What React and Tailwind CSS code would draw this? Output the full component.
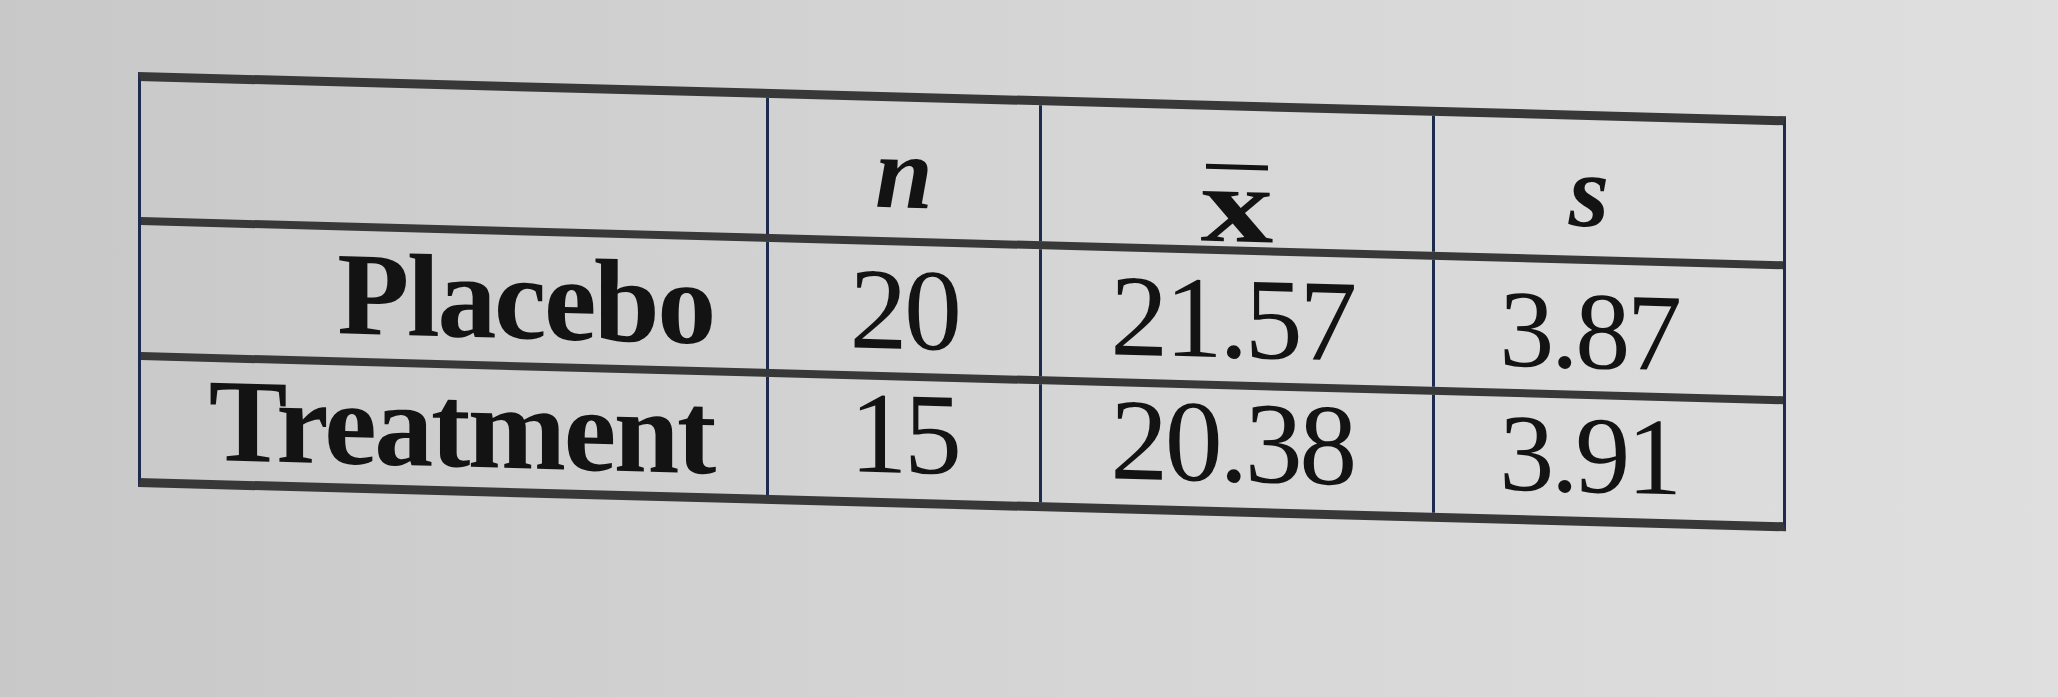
// App.jsx — summary table (n, x̄, s) photographed off a screen
const serif = { fontFamily: '"Liberation Serif", "Times New Roman", serif' };

const rows = [
  { label: "Placebo", n: "20", mean: "21.57", sd: "3.87", h: "h-[135px]", pb: "pb-[5px]", lpb: "pb-[4px]", line: "border-b-[8px]" },
  { label: "Treatment", n: "15", mean: "20.38", sd: "3.91", h: "h-[118px]", pb: "pb-[7px]", lpb: "pb-0", line: "" },
];

function Row({ row }) {
  return (
    <div className={`flex ${row.h} ${row.line} border-b-[#383838]`}>
      <div className={`w-[628px] flex items-end justify-end pr-[52px] ${row.lpb} border-r-[3px] border-r-[#1e2b4f]`}>
        <span className="text-[118px] leading-none font-bold tracking-[-0.02em]">{row.label}</span>
      </div>
      <div className={`w-[273px] flex items-end justify-center ${row.pb} border-r-[3px] border-r-[#1e2b4f]`}>
        <span className="text-[116px] leading-none tracking-[-0.03em]">{row.n}</span>
      </div>
      <div className={`w-[393px] flex items-end justify-center pr-[10px] ${row.pb} border-r-[3px] border-r-[#1e2b4f]`}>
        <span className="text-[116px] leading-none tracking-[-0.03em]">{row.mean}</span>
      </div>
      <div className={`flex-1 flex items-end justify-center pr-[40px] ${row.pb}`}>
        <span className="text-[110px] leading-none tracking-[-0.03em]">{row.sd}</span>
      </div>
    </div>
  );
}

export default function App() {
  return (
    <div
      className="w-[2058px] h-[697px] overflow-hidden bg-gradient-to-r from-[#c8c8c8] via-[#d5d5d5] to-[#dfdfdf] pl-[138px] pt-[72px]"
      style={serif}>
      <div className="w-[1648px] origin-top-left skew-y-[1.54deg] text-[#131313] border-t-[9px] border-b-[9px] border-t-[#383838] border-b-[#383838] border-l-[3px] border-r-[3px] border-l-[#1e2b4f] border-r-[#1e2b4f]">
        {/* header */}
        <div className="flex h-[144px] border-b-[8px] border-b-[#383838]">
          <div className="w-[628px] border-r-[3px] border-r-[#1e2b4f]" />
          <div className="w-[273px] flex items-end justify-center pb-[13px] border-r-[3px] border-r-[#1e2b4f]">
            <span className="text-[104px] leading-none font-bold italic">n</span>
          </div>
          <div className="w-[393px] flex flex-col items-center justify-end pb-[1px] border-r-[3px] border-r-[#1e2b4f]">
            <div className="w-[62px] h-[5px] bg-[#131313] -mb-[5px]" />
            <span className="inline-block text-[108px] leading-[0.75] font-bold scale-x-[1.35]">x</span>
          </div>
          <div className="flex-1 flex items-end justify-center pr-[40px] pb-[13px]">
            <span className="text-[104px] leading-none font-bold italic">s</span>
          </div>
        </div>
        {rows.map((row) => (
          <Row key={row.label} row={row} />
        ))}
      </div>
    </div>
  );
}
